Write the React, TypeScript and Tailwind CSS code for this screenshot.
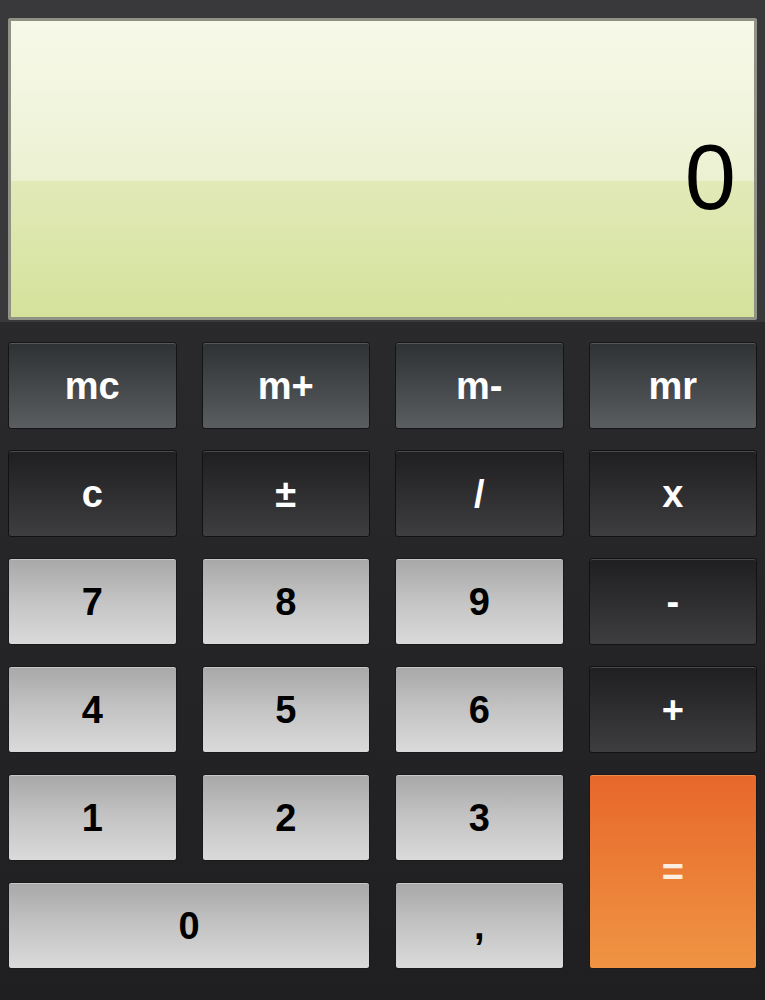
import React from "react";

type Kind = "mem" | "op" | "num" | "eq";

const kindClass: Record<Kind, string> = {
  mem: "bg-gradient-to-b from-[#2f3234] to-[#5b5e61] text-white border-[#151515] shadow-[inset_0_1px_0_#55585a]",
  op: "bg-gradient-to-b from-[#1f1f21] to-[#3e3e40] text-white border-[#121212] shadow-[inset_0_1px_0_#4a4a4c]",
  num: "bg-gradient-to-b from-[#a8a8a8] via-[#c4c4c4] to-[#dadada] text-black border-[#1a1a1a] shadow-[inset_0_1px_0_#c8c8c8]",
  eq: "bg-gradient-to-b from-[#e7672a] to-[#ef9443] text-[#fdeee2] border-[#1a1a1a] shadow-[inset_0_1px_0_#f08a4a]",
};

function Key({ label, kind, className = "" }: { label: string; kind: Kind; className?: string }) {
  return (
    <div
      className={`flex items-center justify-center rounded-[3px] border font-bold text-[38px] leading-none ${kindClass[kind]} ${className}`}
      style={{ fontFamily: '"Liberation Sans", Arial, sans-serif' }}
    >
      {label}
    </div>
  );
}

export default function App() {
  return (
    <div className="w-[765px] h-[1000px] overflow-hidden flex flex-col bg-gradient-to-b from-[#2f2f31] to-[#1f1f21]">
      <div className="bg-[#39393b] px-[8px] pt-[18px] pb-[2px]">
        <div className="h-[302px] border-[3px] border-[#8f9284] rounded-[2px] flex flex-col relative overflow-hidden">
          <div className="h-[160px] bg-gradient-to-b from-[#f7f9e9] to-[#ecf1d2]" />
          <div className="flex-1 bg-gradient-to-b from-[#e2eab8] to-[#d4e29b]" />
          <div
            className="absolute inset-0 flex items-center justify-end pr-[18px] pt-[16px] text-[92px] leading-none text-black"
            style={{ fontFamily: '"Liberation Sans", Arial, sans-serif' }}
          >
            0
          </div>
        </div>
      </div>
      <div className="px-[8px] pt-[20px] grid grid-cols-4 gap-x-[25px] gap-y-[21px] auto-rows-[87px]">
        <Key label="mc" kind="mem" />
        <Key label="m+" kind="mem" />
        <Key label="m-" kind="mem" />
        <Key label="mr" kind="mem" />

        <Key label="c" kind="op" />
        <Key label="±" kind="op" />
        <Key label="/" kind="op" />
        <Key label="x" kind="op" />

        <Key label="7" kind="num" />
        <Key label="8" kind="num" />
        <Key label="9" kind="num" />
        <Key label="-" kind="op" />

        <Key label="4" kind="num" />
        <Key label="5" kind="num" />
        <Key label="6" kind="num" />
        <Key label="+" kind="op" />

        <Key label="1" kind="num" />
        <Key label="2" kind="num" />
        <Key label="3" kind="num" />
        <Key label="=" kind="eq" className="row-span-2" />

        <Key label="0" kind="num" className="col-span-2" />
        <Key label="," kind="num" />
      </div>
    </div>
  );
}
